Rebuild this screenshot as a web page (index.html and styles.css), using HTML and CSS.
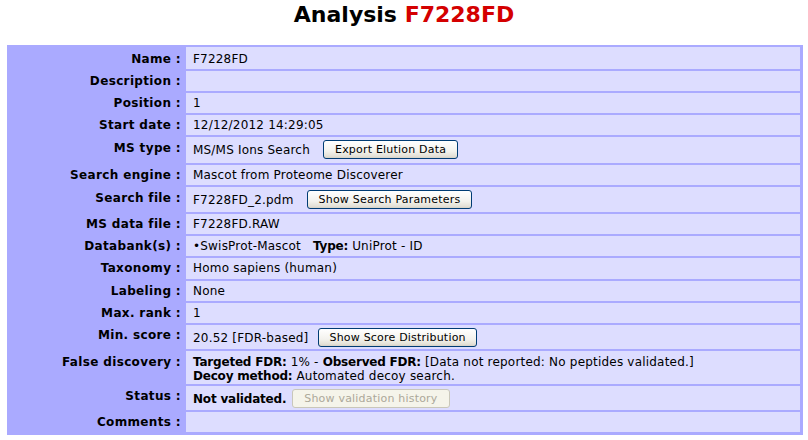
FILE: index.html
```html
<!DOCTYPE html>
<html>
<head>
<meta charset="utf-8">
<title>Analysis F7228FD</title>
<link rel="stylesheet" href="styles.css">
</head>
<body>
<h1 class="title">Analysis <span class="title-id">F7228FD</span></h1>
<div class="info">
  <div class="lbl first">Name :</div><div class="val first">F7228FD</div>
  <div class="lbl">Description :</div><div class="val"></div>
  <div class="lbl">Position :</div><div class="val">1</div>
  <div class="lbl">Start date :</div><div class="val">12/12/2012 14:29:05</div>
  <div class="lbl mid">MS type :</div><div class="val with-btn"><span>MS/MS Ions Search</span><button class="btn">Export Elution Data</button></div>
  <div class="lbl">Search engine :</div><div class="val short">Mascot from Proteome Discoverer</div>
  <div class="lbl mid">Search file :</div><div class="val with-btn tight"><span>F7228FD_2.pdm</span><button class="btn">Show Search Parameters</button></div>
  <div class="lbl">MS data file :</div><div class="val">F7228FD.RAW</div>
  <div class="lbl">Databank(s) :</div><div class="val">•SwisProt-Mascot <b class="gap">Type:</b> UniProt - ID</div>
  <div class="lbl">Taxonomy :</div><div class="val tall">Homo sapiens (human)</div>
  <div class="lbl">Labeling :</div><div class="val">None</div>
  <div class="lbl">Max. rank :</div><div class="val">1</div>
  <div class="lbl">Min. score :</div><div class="val with-btn tighter"><span>20.52 [FDR-based]</span><button class="btn btn-mid">Show Score Distribution</button></div>
  <div class="lbl mid">False discovery :</div><div class="val multi"><b>Targeted FDR:</b> 1% - <b>Observed FDR:</b> [Data not reported: No peptides validated.]<br><b>Decoy method:</b> Automated decoy search.</div>
  <div class="lbl">Status :</div><div class="val with-btn tighter"><b>Not validated.</b><button class="btn btn-near" disabled>Show validation history</button></div>
  <div class="lbl">Comments :</div><div class="val short"></div>
</div>
</body>
</html>
```
FILE: styles.css
```css
html, body {
  margin: 0;
  padding: 0;
  background: #fff;
}
body {
  font-family: "DejaVu Sans", Verdana, sans-serif;
  font-size: 12px;
  color: #000;
  width: 808px;
}
.title {
  font-size: 22px;
  font-weight: bold;
  text-align: center;
  line-height: 26px;
  margin: 2px 0 17px;
}
.title-id {
  color: #d40000;
}
.info {
  display: grid;
  grid-template-columns: 177px 1fr;
  gap: 2px;
  background: #aaf;
  padding: 2px 3px 3px 0;
  width: 796px;
  box-sizing: border-box;
  margin-left: 7px;
}
.lbl {
  font-weight: bold;
  text-align: right;
  padding: 3px 3px 3px 0;
  line-height: 14px;
  letter-spacing: 0.35px;
  align-self: start;
}
.lbl.mid {
  padding-top: 4px;
}
.lbl.first {
  padding-top: 5px;
}
.val {
  background: #ddf;
  padding: 3px 7px 3px;
  line-height: 14px;
  min-height: 14px;
  letter-spacing: 0.2px;
}
.val b {
  letter-spacing: -0.2px;
}
.val.first {
  padding: 5px 7px 2px;
}
.tall {
  padding-bottom: 4px;
}
.short {
  padding-bottom: 2px;
}
.multi {
  padding: 4px 7px 1px;
}
.with-btn {
  display: flex;
  align-items: center;
  padding: 3px 7px 4px;
}
.with-btn.tight {
  padding: 3px 7px 3px;
}
.with-btn.tighter {
  padding: 3px 7px 2px;
}
.gap {
  margin-left: 8px;
}
.btn {
  font-family: "DejaVu Sans", Verdana, sans-serif;
  font-size: 11px;
  letter-spacing: 0.2px;
  height: 19px;
  padding: 0 11px;
  margin-left: 13px;
  border: 1px solid #003c74;
  border-radius: 3px;
  background: linear-gradient(#ffffff, #f3f2ed 60%, #e3e0d6 90%, #d6d0c5);
  color: #000;
}
.btn-mid {
  margin-left: 10px;
  padding: 0 10px;
}
.btn-near {
  margin-left: 6px;
}
.btn:disabled {
  border-color: #c9c7ba;
  background: #f5f4ea;
  color: #aca899;
  padding: 0 11px;
}
```
